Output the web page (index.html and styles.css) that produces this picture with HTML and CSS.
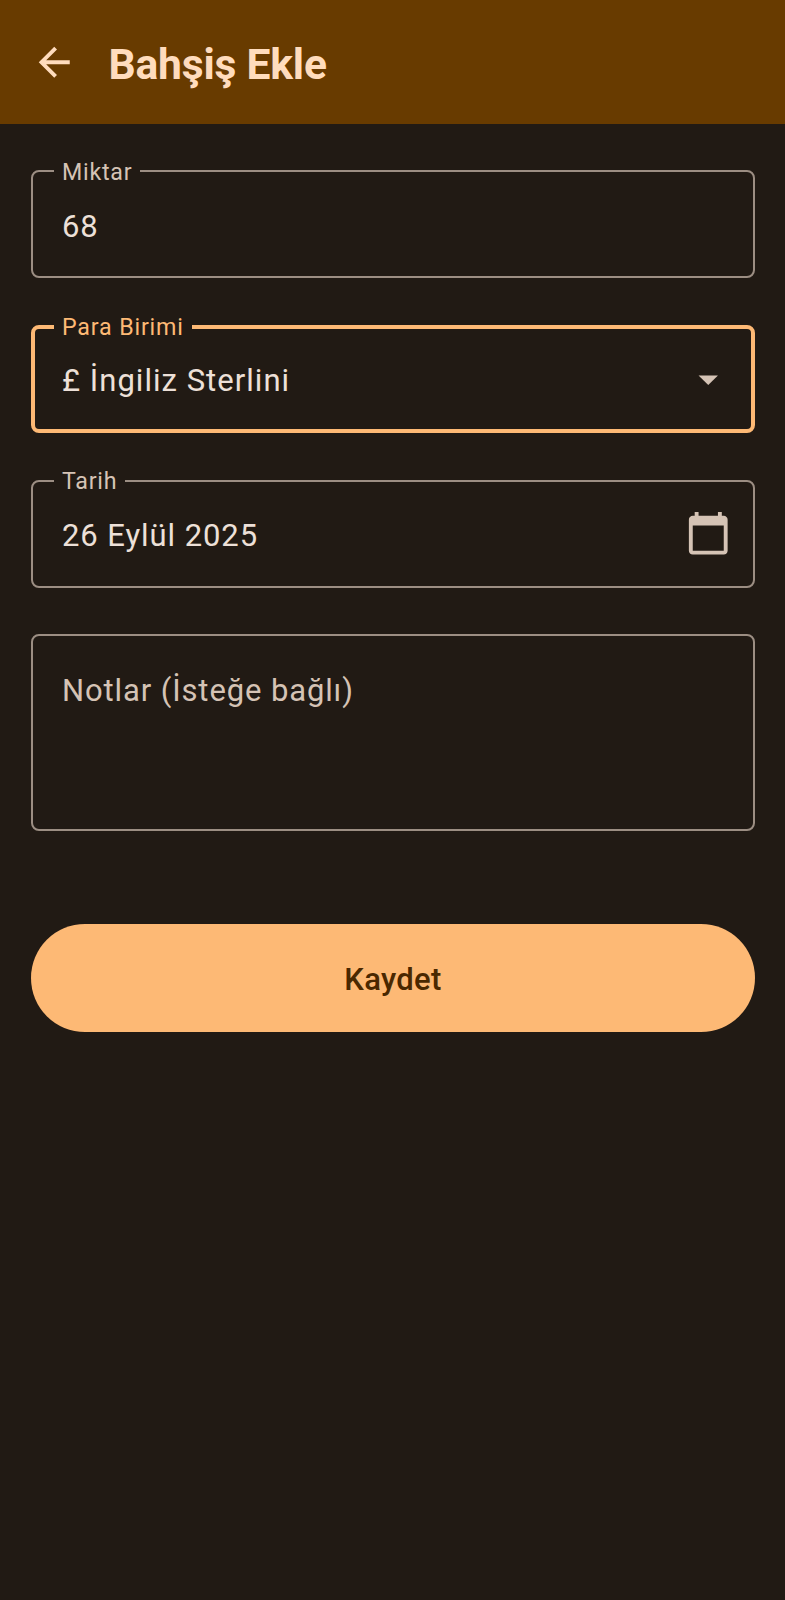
FILE: index.html
```html
<!DOCTYPE html>
<html lang="tr">
<head>
<meta charset="utf-8">
<title>Bahşiş Ekle</title>
<link rel="stylesheet" href="styles.css">
</head>
<body>
<header class="app-bar">
  <svg class="back" viewBox="0 0 24 24"><path d="M20 11H7.83l5.59-5.59L12 4l-8 8 8 8 1.41-1.41L7.83 13H20z"/></svg>
  <h1 class="title">Bahşiş Ekle</h1>
</header>
<main class="form">
  <fieldset class="field amount">
    <legend class="label">Miktar</legend>
    <div class="row"><span class="value">68</span></div>
  </fieldset>
  <fieldset class="field focused">
    <legend class="label">Para Birimi</legend>
    <div class="row"><span class="value">£ İngiliz Sterlini</span>
      <svg class="icon" viewBox="0 0 24 24"><path d="M7 10l5 5 5-5z"/></svg></div>
  </fieldset>
  <fieldset class="field date">
    <legend class="label">Tarih</legend>
    <div class="row"><span class="value">26 Eylül 2025</span>
      <svg class="icon" viewBox="0 0 24 24"><path d="M20 3h-1V1h-2v2H7V1H5v2H4c-1.100 0-2 .9-2 2v16c0 1.100.9 2 2 2h16c1.100 0 2-.9 2-2V5c0-1.100-.9-2-2-2zm0 18H4V8h16v13z"/></svg></div>
  </fieldset>
  <div class="notes">Notlar (İsteğe bağlı)</div>
  <button class="save" type="button">Kaydet</button>
</main>
</body>
</html>
```
FILE: styles.css
```css
* { box-sizing: border-box; }
body {
  margin: 0;
  min-height: 1600px;
  background: #211a14;
  color: #ede0d8;
  font-family: Roboto, "Liberation Sans", sans-serif;
}
.app-bar {
  display: flex;
  align-items: center;
  height: 124px;
  padding-left: 31px;
  background: #683b00;
  color: #ffdcbd;
}
.back { width: 46.5px; height: 46.5px; fill: currentColor; }
.title {
  margin: 3px 0 0 31px;
  font-size: 42.6px;
  font-weight: 700;
  line-height: 54px;
  letter-spacing: -0.2px;
}
.form { display: flex; flex-direction: column; padding: 33px 30px 0 31px; }
.field {
  min-width: 0;
  height: 121px;
  margin: 0 0 34px;
  padding: 0 21px;
  border: 2px solid #9c8e83;
  border-radius: 8px;
}
.label {
  height: 28px;
  padding: 0 8px;
  color: #d5c3b5;
  font-size: 23.25px;
  line-height: 29px;
  letter-spacing: 0.75px;
}
.amount .label { line-height: 30px; }
.row {
  display: flex;
  align-items: flex-start;
  justify-content: space-between;
  padding: 15px 1px 0 8px;
}
.value { padding-top: 4px; font-size: 31px; line-height: 46px; letter-spacing: 0.93px; }
.icon { width: 46.5px; height: 46.5px; fill: #d5c3b5; }
.focused {
  height: 120px;
  margin-top: 1px;
  padding: 0 19px;
  border: 4px solid #fdb975;
}
.focused .label { color: #fdb975; line-height: 28px; letter-spacing: 0.82px; }
.focused .value { padding-top: 2px; letter-spacing: 1.03px; }
.date .value { padding-top: 3px; letter-spacing: 0.93px; }
.notes {
  height: 197px;
  margin-top: 12px;
  padding: 32px 29px;
  border: 2px solid #9c8e83;
  border-radius: 8px;
  color: #d5c3b5;
  font-size: 31px;
  line-height: 46px;
  letter-spacing: 0.88px;
}
.save {
  height: 108px;
  margin-top: 93px;
  padding: 3px 0 0;
  border: 0;
  border-radius: 54px;
  background: #fdb975;
  color: #4a2800;
  font: 500 31px Roboto, "Liberation Sans", sans-serif;
  letter-spacing: 0.3px;
}
```
